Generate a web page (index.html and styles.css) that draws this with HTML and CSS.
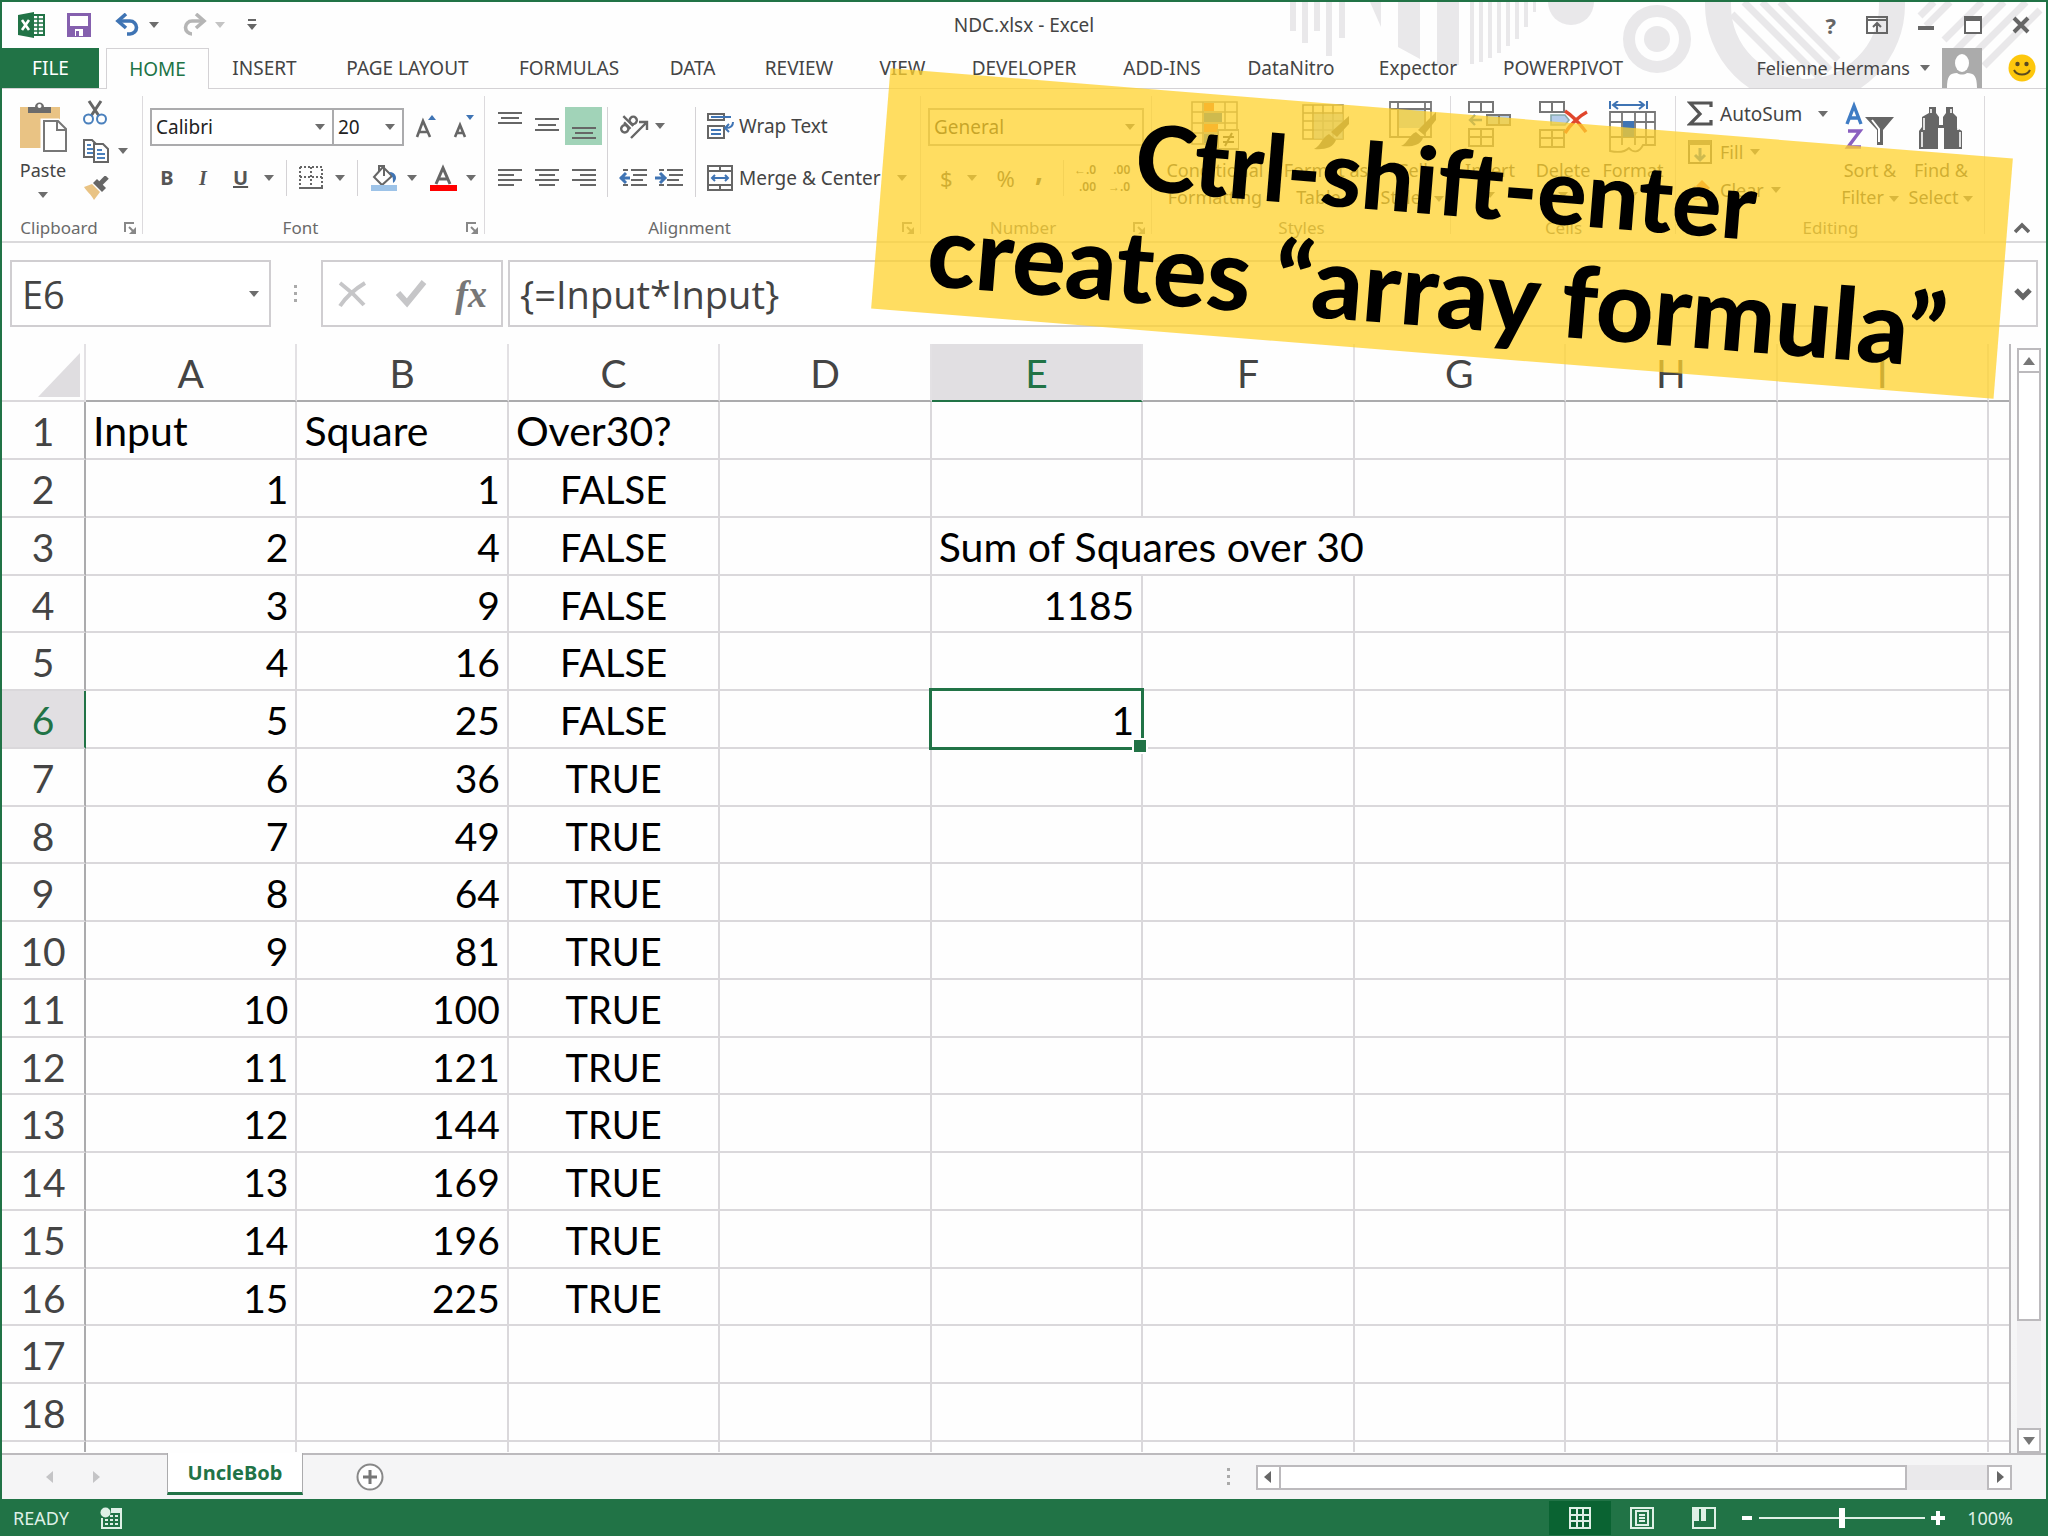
FILE: index.html
```html
<!DOCTYPE html>
<html lang="en">
<head>
<meta charset="utf-8">
<meta name="viewport" content="width=device-width, initial-scale=1">
<title>NDC.xlsx - Excel</title>
<link rel="stylesheet" href="styles.css">
</head>
<body>
<svg class="defs" aria-hidden="true">
  <symbol id="down" viewBox="0 0 10 6"><path d="M0 0h10L5 6z" fill="currentColor"/></symbol>
  <symbol id="launch" viewBox="0 0 12 12"><path d="M1 10V1h9" fill="none" stroke="currentColor" stroke-width="2"/><path d="M5 5l5 5" stroke="currentColor" stroke-width="2"/><path d="M12 5v7H5z" fill="currentColor"/></symbol>
</svg>

<div class="app">
  <svg class="backdrop" viewBox="0 0 768 86" aria-hidden="true">
    <g fill="#e9e8ea">
      <path d="M10 0h6v29h-6zM22 0h6v41h-6zM34 0h6v29h-6zM46 0h6v54h-6zM59 0h6v36h-6zM90 0h11v25z"/>
      <path d="M118 0h22v57l-22-12zM157 0h22v63h-22z"/>
      <path d="M190 0h4v62h-4zM199 0h4v60h-4zM208 0h4v56h-4zM217 0h4v51h-4zM226 0h4v44h-4zM235 0h4v37h-4zM244 0h4v25h-4zM253 0h3v10h-3z"/>
      <circle cx="291" cy="0" r="23"/>
      <circle cx="377" cy="37" r="13"/>
    </g>
    <g fill="none" stroke="#e9e8ea">
      <circle cx="377" cy="37" r="28" stroke-width="12"/>
      <circle cx="525" cy="3" r="87" stroke-width="26"/>
      <path stroke-width="7" d="M452 12l72 72M452 46l36 36M464 0l76 76M482 0l68 68M500 0l58 58M640 14l14-14M646 24l24-24M664 38l38-38M672 52l52-52M684 62l62-62M704 64l56-56"/>
    </g>
  </svg>

  <header class="titlebar">
    <div class="quick">
      <svg width="28" height="28" viewBox="0 0 28 28"><path d="M14 4h13v20H14z" fill="#fff" stroke="#217346" stroke-width="2"/><path d="M15 8h11M15 12h11M15 16h11M15 20h11M21 5v18" stroke="#217346" stroke-width="1.6"/><path d="M1 4l16-3v26L1 24z" fill="#217346"/><path d="M5 9l7 10M12 9L5 19" stroke="#fff" stroke-width="2.6"/></svg>
      <button aria-label="Save"><svg width="24" height="24" viewBox="0 0 24 24"><path d="M1.500 1.500h21v21h-21z" fill="#fff" stroke="#8560ae" stroke-width="3"/><path d="M3 13h18v9H3z" fill="#8560ae"/><path d="M8 16h8v7H8z" fill="#fff"/><path d="M9 18h3v5H9z" fill="#8560ae"/></svg></button>
      <button aria-label="Undo" class="split undo"><svg width="26" height="24" viewBox="0 0 26 24"><path d="M4 8h11a6.500 6.500 0 0 1 0 13h-3" fill="none" stroke="#3f74b4" stroke-width="3.600"/><path d="M11 1L3 8l8 7" fill="none" stroke="#3f74b4" stroke-width="3.600"/></svg><svg class="arrow"><use href="#down"/></svg></button>
      <button aria-label="Redo" class="split faded"><svg width="26" height="24" viewBox="0 0 26 24"><path d="M22 8H11a6.500 6.500 0 0 0 0 13" fill="none" stroke="#b5b5b5" stroke-width="3.600"/><path d="M15 1l8 7-8 7" fill="none" stroke="#b5b5b5" stroke-width="3.600"/></svg><svg class="arrow"><use href="#down"/></svg></button>
      <button aria-label="Customize toolbar"><svg width="10" height="12" viewBox="0 0 10 12"><path d="M1 1h8" stroke="#666" stroke-width="2"/><path d="M0 5h10l-5 6z" fill="#666"/></svg></button>
    </div>
    <h1>NDC.xlsx - Excel</h1>
    <div class="window-controls">
      <button aria-label="Help" class="help">?</button>
      <button aria-label="Ribbon display options"><svg width="22" height="18" viewBox="0 0 22 18"><path d="M1 1h20v16H1zM1 4h20M11 16V8M7 11l4-4 4 4" fill="none" stroke="#666" stroke-width="2"/></svg></button>
      <button aria-label="Minimize"><svg width="16" height="18" viewBox="0 0 16 18"><path d="M0 12h16" stroke="#666" stroke-width="4"/></svg></button>
      <button aria-label="Maximize"><svg width="18" height="18" viewBox="0 0 18 18"><path d="M1 1h16v16H1z" fill="#fff" stroke="#666" stroke-width="2"/><path d="M0 0h18v5H0z" fill="#666"/></svg></button>
      <button aria-label="Close"><svg width="18" height="18" viewBox="0 0 18 18"><path d="M2 2l14 14M16 2L2 16" stroke="#666" stroke-width="4"/></svg></button>
    </div>
  </header>

  <nav class="tabs">
    <a class="file" href="#file">FILE</a>
    <span></span>
    <a class="current" href="#home">HOME</a>
    <a href="#insert">INSERT</a>
    <a href="#page-layout">PAGE LAYOUT</a>
    <a href="#formulas">FORMULAS</a>
    <a href="#data">DATA</a>
    <a href="#review">REVIEW</a>
    <a href="#view">VIEW</a>
    <a href="#developer">DEVELOPER</a>
    <a href="#add-ins">ADD-INS</a>
    <a href="#datanitro">DataNitro</a>
    <a href="#expector">Expector</a>
    <a href="#powerpivot">POWERPIVOT</a>
    <div class="account">
      <button class="split">Felienne Hermans<svg class="arrow"><use href="#down"/></svg></button>
      <svg width="40" height="40" viewBox="0 0 40 40"><path d="M0 0h40v40H0z" fill="#ababab"/><ellipse cx="20" cy="15" rx="7" ry="9" fill="#fff"/><path d="M5 40c0-12 3-15 10-15 3 2 7 2 10 0 7 0 10 3 10 15z" fill="#fff"/></svg>
      <svg width="28" height="28" viewBox="0 0 28 28"><circle cx="14" cy="14" r="13.500" fill="#fdc70d"/><circle cx="9.500" cy="10" r="2.200" fill="#5a4a20"/><circle cx="18.500" cy="10" r="2.200" fill="#5a4a20"/><path d="M6 16c3 6 13 6 16 0" fill="none" stroke="#5a4a20" stroke-width="2"/></svg>
    </div>
  </nav>

  <section class="ribbon" aria-label="Home">
    <div class="group clipboard">
      <div class="body">
        <button class="big"><svg width="48" height="52" viewBox="0 0 48 52"><path d="M1 6h40v41H1z" fill="#e9c384"/><path d="M9 12V6h7c0-6 9-6 9 0h7v6z" fill="#6b6b6b"/><circle cx="20.500" cy="5" r="2" fill="#fff"/><path d="M24 20h15l8 8v22H24z" fill="#fff" stroke="#fff" stroke-width="5"/><path d="M25 20h14l8 8v22H25zM38 20v9h9" fill="#fff" stroke="#777" stroke-width="2"/></svg><span>Paste</span><svg class="arrow"><use href="#down"/></svg></button>
        <div class="stack">
          <button aria-label="Cut"><svg width="24" height="26" viewBox="0 0 24 26"><path d="M6 1l10 15M18 1L8 16" stroke="#666" stroke-width="3"/><circle cx="5.500" cy="19" r="4.500" fill="none" stroke="#4a80bd" stroke-width="2"/><circle cx="18.500" cy="19" r="4.500" fill="none" stroke="#4a80bd" stroke-width="2"/></svg></button>
          <button aria-label="Copy" class="split"><svg width="26" height="24" viewBox="0 0 26 24"><path d="M1 1h8l5 5v12H1z" fill="#fff" stroke="#666" stroke-width="2"/><path d="M4 6h4M4 10h6M4 14h6" stroke="#4a80bd" stroke-width="2"/><path d="M11 5h9l5 5v13H11z" fill="#fff" stroke="#666" stroke-width="2"/><path d="M14 11h5M14 15h8M14 19h8" stroke="#4a80bd" stroke-width="2"/></svg><svg class="arrow"><use href="#down"/></svg></button>
          <button aria-label="Format painter"><svg width="26" height="24" viewBox="0 0 26 24"><path d="M1 11l8-3 8 8-6 8C8 18 4 16 1 11z" fill="#e9c384"/><path d="M10 7l4-4 9 9-4 4z" fill="#666"/><path d="M16 9l8-8" stroke="#666" stroke-width="5"/></svg></button>
        </div>
      </div>
      <div class="caption dialog">Clipboard<svg class="launch"><use href="#launch"/></svg></div>
    </div>

    <div class="group font">
      <div class="body rows">
        <div class="row">
          <label class="combo face"><select aria-label="Font"><option>Calibri</option></select><svg class="arrow"><use href="#down"/></svg></label><label class="combo size"><select aria-label="Font size"><option>20</option></select><svg class="arrow"><use href="#down"/></svg></label>
          <button class="grow" aria-label="Increase font size"><svg width="22" height="26" viewBox="0 0 22 26"><path d="M2 23L8 7l7 16M4 18h8" fill="none" stroke="#666" stroke-width="2.600"/><path d="M13 6h8l-4-5z" fill="#3f74b4"/></svg></button>
          <button class="shrink" aria-label="Decrease font size"><svg width="22" height="26" viewBox="0 0 22 26"><path d="M2 23L7 11l5 12M4 19h6" fill="none" stroke="#666" stroke-width="2.600"/><path d="M13 1h8l-4 5z" fill="#3f74b4"/></svg></button>
        </div>
        <div class="row second">
          <button class="letter"><b>B</b></button>
          <button class="letter"><i>I</i></button>
          <button class="letter split"><u>U</u><svg class="arrow"><use href="#down"/></svg></button>
          <i class="rule"></i>
          <button class="split" aria-label="Borders"><svg width="24" height="24" viewBox="0 0 24 24"><path d="M1 1h22v20M1 1v20M12 1v20M1 11h22" fill="none" stroke="#666" stroke-width="2" stroke-dasharray="2 2"/><path d="M0 22h24" stroke="#666" stroke-width="2"/></svg><svg class="arrow"><use href="#down"/></svg></button>
          <i class="rule"></i>
          <button class="split tight" aria-label="Fill color"><svg width="28" height="28" viewBox="0 0 28 28"><path d="M13 3L4 13l8 8 10-9z" fill="#fff" stroke="#666" stroke-width="2"/><path d="M9 8V2h5v10" fill="none" stroke="#666" stroke-width="2"/><path d="M19 8c8 0 9 8 4 11 0-5 0-7-4-11z" fill="#3f74b4"/><path d="M1 21h26v6H1z" fill="#9dc3e8"/></svg><svg class="arrow"><use href="#down"/></svg></button>
          <button class="split tight" aria-label="Font color"><svg width="28" height="28" viewBox="0 0 28 28"><path d="M7 20l7-16 7 16M9 15h10" fill="none" stroke="#666" stroke-width="3"/><path d="M1 21h27v6H1z" fill="#f00"/></svg><svg class="arrow"><use href="#down"/></svg></button>
        </div>
      </div>
      <div class="caption dialog">Font<svg class="launch"><use href="#launch"/></svg></div>
    </div>

    <div class="group alignment">
      <div class="body">
        <div class="align-grid">
          <button aria-label="Top align"><svg width="24" height="38" viewBox="0 0 24 38"><path d="M0 6h24M3 11h18M0 16h24" stroke="#666" stroke-width="2"/></svg></button>
          <button aria-label="Middle align"><svg width="24" height="38" viewBox="0 0 24 38"><path d="M0 12h24M3 18h18M0 23h24" stroke="#666" stroke-width="2"/></svg></button>
          <button aria-label="Bottom align" class="pressed"><svg width="24" height="38" viewBox="0 0 24 38"><path d="M0 21h24M3 26h18M0 31h24" stroke="#666" stroke-width="2"/></svg></button>
          <button aria-label="Align left"><svg width="24" height="18" viewBox="0 0 24 18"><path d="M0 1h24M0 6h16M0 11h24M0 16h16" stroke="#666" stroke-width="2"/></svg></button>
          <button aria-label="Center"><svg width="24" height="18" viewBox="0 0 24 18"><path d="M0 1h24M4 6h16M0 11h24M4 16h16" stroke="#666" stroke-width="2"/></svg></button>
          <button aria-label="Align right"><svg width="24" height="18" viewBox="0 0 24 18"><path d="M0 1h24M8 6h16M0 11h24M8 16h16" stroke="#666" stroke-width="2"/></svg></button>
        </div>
        <div class="indent-grid">
          <button class="split" aria-label="Orientation"><svg width="30" height="28" viewBox="0 0 30 28"><g fill="none" stroke="#666" stroke-width="2.400"><g transform="rotate(-45 10 14)"><circle cx="5" cy="13" r="3.600"/><path d="M9 8v9M13 3v14"/><circle cx="17" cy="13" r="3.600"/></g><path d="M12 26l15-15M20 10h8v8"/></g></svg><svg class="arrow"><use href="#down"/></svg></button>
          <div class="pair">
            <button aria-label="Decrease indent"><svg width="28" height="18" viewBox="0 0 28 18"><path d="M4 1h5M4 16h5M12 1h16M14 6h14M12 11h12M12 16h16" stroke="#666" stroke-width="2"/><path d="M1 9h10M7 4L2 9l5 5" fill="none" stroke="#3f74b4" stroke-width="3"/></svg></button>
            <button aria-label="Increase indent"><svg width="28" height="18" viewBox="0 0 28 18"><path d="M4 1h5M4 16h5M12 1h16M14 6h14M12 11h12M12 16h16" stroke="#666" stroke-width="2"/><path d="M0 9h10M5 4l5 5-5 5" fill="none" stroke="#3f74b4" stroke-width="3"/></svg></button>
          </div>
        </div>
        <div class="text-grid">
          <button><svg width="28" height="26" viewBox="0 0 28 26"><path d="M1 1h16v6H1zM1 13h16v12H1z" fill="none" stroke="#666" stroke-width="2"/><path d="M4 4h20M4 17h10M4 21h10M26 9c0 5-3 6-7 6M22 11l-4 4 4 4" fill="none" stroke="#3f74b4" stroke-width="2"/></svg>Wrap Text</button>
          <button><svg width="28" height="26" viewBox="0 0 28 26"><path d="M1 1h24v24H1zM1 6h24M1 20h24M13 1v5M13 20v5" fill="none" stroke="#666" stroke-width="2"/><path d="M5 13h16M8 10l-3 3 3 3M18 10l3 3-3 3" fill="none" stroke="#3f74b4" stroke-width="2"/></svg>Merge &amp; Center<svg class="arrow"><use href="#down"/></svg></button>
        </div>
      </div>
      <div class="caption dialog">Alignment<svg class="launch"><use href="#launch"/></svg></div>
    </div>

    <div class="group number">
      <div class="body rows">
        <div class="row"><label class="combo format"><select aria-label="Number format"><option>General</option></select><svg class="arrow"><use href="#down"/></svg></label></div>
        <div class="row second">
          <button class="sign split">$<svg class="arrow"><use href="#down"/></svg></button>
          <button class="sign">%</button>
          <button class="sign comma"><b>,</b></button>
          <i class="rule"></i>
          <button class="decimals"><span>←.0</span><span>.00</span></button>
          <button class="decimals"><span>.00</span><span>→.0</span></button>
        </div>
      </div>
      <div class="caption dialog">Number<svg class="launch"><use href="#launch"/></svg></div>
    </div>

    <div class="group styles">
      <div class="body">
        <button class="big"><svg width="48" height="52" viewBox="0 0 48 52"><path d="M1 1h45v42H1zM1 11h45M1 22h45M1 32h45M12 1v42M34 1v42" fill="#fff" stroke="#888" stroke-width="1.600"/><path d="M13 2h10v8H13zM13 23h14v8H13z" fill="#e8703a"/><path d="M13 12h18v9H13zM13 33h10v9H13z" fill="#3f74b4"/><path d="M27 29h21v19H27z" fill="#fff" stroke="#888" stroke-width="2"/><path d="M32 36h11M32 41h11M41 32l-7 13" stroke="#444" stroke-width="2"/></svg><span>Conditional<br>Formatting</span></button>
        <button class="big"><svg width="48" height="52" viewBox="0 0 48 52"><path d="M1 4h40v34H1zM1 12h40M1 20h40M1 29h40M11 4v34M21 4v34M31 4v34" fill="#fff" stroke="#777" stroke-width="1.600"/><path d="M12 13h29v25H12z" fill="#9dbbe0" opacity=".7"/><path d="M47 15v8L35 36l-6-5z" fill="#666"/><path d="M27 33l7 6c-3 8-12 10-22 9 7-3 8-12 15-15z" fill="#666"/></svg><span>Format as<br>Table<svg class="arrow"><use href="#down"/></svg></span></button>
        <button class="big"><svg width="48" height="52" viewBox="0 0 48 52"><path d="M1 1h41v35H1zM1 8h41M9 1v35M36 1v35" fill="#fff" stroke="#777" stroke-width="1.800"/><path d="M10 9h25v18H10z" fill="#b5cdea"/><path d="M47 11v8L35 34l-6-5z" fill="#666"/><path d="M27 31l7 6c-3 8-12 9-22 8 7-3 8-11 15-14z" fill="#666"/></svg><span>Cell<br>Styles<svg class="arrow"><use href="#down"/></svg></span></button>
      </div>
      <div class="caption">Styles</div>
    </div>

    <div class="group cells">
      <div class="body">
        <button class="big"><svg width="48" height="52" viewBox="0 0 48 52"><path d="M3 1h24v10H3zM15 1v10M3 28h24v17H3zM15 28v17M3 36h24" fill="#fff" stroke="#777" stroke-width="2"/><path d="M21 14h23v10H21z" fill="#b5cdea" stroke="#777" stroke-width="2"/><path d="M33 14v10" stroke="#777" stroke-width="2"/><path d="M4 19h12M9 14l-5 5 5 5" fill="none" stroke="#3f74b4" stroke-width="2.400"/></svg><span>Insert</span><svg class="arrow"><use href="#down"/></svg></button>
        <button class="big"><svg width="52" height="52" viewBox="0 0 52 52"><path d="M3 1h24v10H3zM15 1v10M3 29h24v17H3zM15 29v17M3 37h24" fill="#fff" stroke="#777" stroke-width="2"/><path d="M14 14h14l4 5-4 5H14z" fill="#b5cdea" stroke="#8aa" stroke-width="1.600"/><path d="M28 10c8 5 15 13 21 21M50 11c-8 4-17 13-22 21" fill="none" stroke="#e0462c" stroke-width="3.400"/></svg><span>Delete</span><svg class="arrow"><use href="#down"/></svg></button>
        <button class="big"><svg width="48" height="52" viewBox="0 0 48 52"><path d="M1 0v8M38 0v8M4 4h31M9 0L4 4l5 4M30 0l5 4-5 4" fill="none" stroke="#3f74b4" stroke-width="2"/><path d="M1 11h45v33H34c-4 8-10 8-14 3-4 4-10 5-19 3zM1 21h45M1 36h45M13 11v33M26 11v33M37 11v33" fill="#fff" stroke="#777" stroke-width="1.800"/><path d="M14 20h11v16H14z" fill="#3f74b4"/></svg><span>Format</span><svg class="arrow"><use href="#down"/></svg></button>
      </div>
      <div class="caption">Cells</div>
    </div>

    <div class="group editing">
      <div class="body">
        <div class="stack wide">
          <button><svg width="26" height="26" viewBox="0 0 26 26"><path d="M24 6V2H3l10 11L3 23h21v-4" fill="none" stroke="#555" stroke-width="3.200"/></svg>AutoSum<svg class="arrow far"><use href="#down"/></svg></button>
          <button><svg width="26" height="26" viewBox="0 0 26 26"><path d="M2 2h22v22H2z" fill="#fff" stroke="#666" stroke-width="2"/><path d="M2 1h22v5H2z" fill="#777"/><path d="M13 9v12M8 16l5 5 5-5" fill="none" stroke="#3f74b4" stroke-width="3"/></svg>Fill<svg class="arrow"><use href="#down"/></svg></button>
          <button><svg width="26" height="26" viewBox="0 0 26 26"><path d="M15 3l8 8-6 6-8-8z" fill="#e8703a"/><path d="M8 10l8 8-3 4H8l-5-6z" fill="#fff" stroke="#e8a080" stroke-width="2"/></svg>Clear<svg class="arrow"><use href="#down"/></svg></button>
        </div>
        <button class="big"><svg width="52" height="52" viewBox="0 0 52 52"><path d="M3 23L10 5l7 18M5 17h10" fill="none" stroke="#3f7cc4" stroke-width="3.400"/><path d="M4 30h12L4 46h13" fill="none" stroke="#8a5fc0" stroke-width="3.400"/><path d="M21 16h29L39 29v15h-6V29z" fill="#666"/><path d="M28 19l7 9v13" fill="none" stroke="#fff" stroke-width="2"/></svg><span>Sort &amp;<br>Filter<svg class="arrow"><use href="#down"/></svg></span></button>
        <button class="big"><svg width="46" height="52" viewBox="0 0 46 52"><path d="M11 6h7v6l3 4v8h4v-8l3-4V6h7v6l4 4v11l5 3v18H26V27h-6v21H1V30l3-4V16l7-4z" fill="#666"/><path d="M6 17v12M4 31v15M40 17v12M42 31v15M13 8v4M33 8v4" stroke="#fff" stroke-width="1.600"/></svg><span>Find &amp;<br>Select<svg class="arrow"><use href="#down"/></svg></span></button>
      </div>
      <div class="caption">Editing</div>
    </div>

    <button class="collapse" aria-label="Collapse ribbon"><svg width="16" height="12" viewBox="0 0 16 12"><path d="M1 10l7-7 7 7" fill="none" stroke="#666" stroke-width="3.600"/></svg></button>
  </section>

  <section class="formula-bar">
    <label class="name-box"><input value="E6" aria-label="Name box"><svg class="arrow"><use href="#down"/></svg></label>
    <svg class="grip" width="4" height="20" viewBox="0 0 4 20"><path d="M0 1h3v3H0zM0 8h3v3H0zM0 15h3v3H0z" fill="#aaa"/></svg>
    <div class="entry">
      <button aria-label="Cancel"><svg width="30" height="30" viewBox="0 0 30 30"><path d="M3 4c8 6 16 13 24 22M28 4C18 10 9 18 3 27" fill="none" stroke="#c6c6c8" stroke-width="4"/></svg></button>
      <button aria-label="Enter"><svg width="32" height="30" viewBox="0 0 32 30"><path d="M3 14l9 10L29 3" fill="none" stroke="#c6c6c8" stroke-width="6"/></svg></button>
      <button class="fx">fx</button>
    </div>
    <label class="formula"><input value="{=Input*Input}" aria-label="Formula"><svg width="18" height="14" viewBox="0 0 18 14"><path d="M2 3l7 7 7-7" fill="none" stroke="#666" stroke-width="5"/></svg></label>
  </section>

  <main class="sheet">
    <div class="grid-window">
      <table>
        <colgroup><col class="head"><col><col><col><col><col><col><col><col><col><col class="tail"></colgroup>
        <thead>
          <tr><th><svg class="corner" width="42" height="44" viewBox="0 0 42 44"><path d="M42 0v44H0z" fill="#dfdde0"/></svg></th><th>A</th><th>B</th><th>C</th><th>D</th><th class="active">E</th><th>F</th><th>G</th><th>H</th><th>I</th><th></th></tr>
        </thead>
        <tbody>
          <tr><th>1</th><td class="t">Input</td><td class="t">Square</td><td class="t">Over30?</td><td></td><td></td><td></td><td></td><td></td><td></td><td></td></tr>
          <tr><th>2</th><td>1</td><td>1</td><td class="c">FALSE</td><td></td><td></td><td></td><td></td><td></td><td></td><td></td></tr>
          <tr><th>3</th><td>2</td><td>4</td><td class="c">FALSE</td><td></td><td class="t" colspan="3">Sum of Squares over 30</td><td></td><td></td><td></td></tr>
          <tr><th>4</th><td>3</td><td>9</td><td class="c">FALSE</td><td></td><td>1185</td><td></td><td></td><td></td><td></td><td></td></tr>
          <tr><th>5</th><td>4</td><td>16</td><td class="c">FALSE</td><td></td><td></td><td></td><td></td><td></td><td></td><td></td></tr>
          <tr><th class="active">6</th><td>5</td><td>25</td><td class="c">FALSE</td><td></td><td class="selected">1</td><td></td><td></td><td></td><td></td><td></td></tr>
          <tr><th>7</th><td>6</td><td>36</td><td class="c">TRUE</td><td></td><td></td><td></td><td></td><td></td><td></td><td></td></tr>
          <tr><th>8</th><td>7</td><td>49</td><td class="c">TRUE</td><td></td><td></td><td></td><td></td><td></td><td></td><td></td></tr>
          <tr><th>9</th><td>8</td><td>64</td><td class="c">TRUE</td><td></td><td></td><td></td><td></td><td></td><td></td><td></td></tr>
          <tr><th>10</th><td>9</td><td>81</td><td class="c">TRUE</td><td></td><td></td><td></td><td></td><td></td><td></td><td></td></tr>
          <tr><th>11</th><td>10</td><td>100</td><td class="c">TRUE</td><td></td><td></td><td></td><td></td><td></td><td></td><td></td></tr>
          <tr><th>12</th><td>11</td><td>121</td><td class="c">TRUE</td><td></td><td></td><td></td><td></td><td></td><td></td><td></td></tr>
          <tr><th>13</th><td>12</td><td>144</td><td class="c">TRUE</td><td></td><td></td><td></td><td></td><td></td><td></td><td></td></tr>
          <tr><th>14</th><td>13</td><td>169</td><td class="c">TRUE</td><td></td><td></td><td></td><td></td><td></td><td></td><td></td></tr>
          <tr><th>15</th><td>14</td><td>196</td><td class="c">TRUE</td><td></td><td></td><td></td><td></td><td></td><td></td><td></td></tr>
          <tr><th>16</th><td>15</td><td>225</td><td class="c">TRUE</td><td></td><td></td><td></td><td></td><td></td><td></td><td></td></tr>
          <tr><th>17</th><td></td><td></td><td></td><td></td><td></td><td></td><td></td><td></td><td></td><td></td></tr>
          <tr><th>18</th><td></td><td></td><td></td><td></td><td></td><td></td><td></td><td></td><td></td><td></td></tr>
          <tr class="cut"><th></th><td></td><td></td><td></td><td></td><td></td><td></td><td></td><td></td><td></td><td></td></tr>
        </tbody>
      </table>
    </div>
    <div class="vscroll">
      <button aria-label="Scroll up"><svg width="12" height="8" viewBox="0 0 12 8"><path d="M0 8h12L6 0z" fill="#777"/></svg></button>
      <div class="thumb"></div>
      <div class="track"></div>
      <button aria-label="Scroll down"><svg width="12" height="8" viewBox="0 0 12 8"><path d="M0 0h12L6 8z" fill="#777"/></svg></button>
    </div>
  </main>

  <footer class="sheet-bar">
    <div class="sheet-nav">
      <button aria-label="Previous sheet"><svg width="8" height="12" viewBox="0 0 8 12"><path d="M7 0v12L0 6z" fill="#c4c4c6"/></svg></button>
      <button aria-label="Next sheet"><svg width="8" height="12" viewBox="0 0 8 12"><path d="M1 0v12l7-6z" fill="#c4c4c6"/></svg></button>
    </div>
    <button class="sheet-tab">UncleBob</button>
    <button class="add" aria-label="New sheet"><svg width="28" height="28" viewBox="0 0 28 28"><circle cx="14" cy="14" r="12.500" fill="#fff" stroke="#888" stroke-width="2"/><path d="M14 7v14M7 14h14" stroke="#777" stroke-width="3"/></svg></button>
    <svg class="grip" width="4" height="20" viewBox="0 0 4 20"><path d="M0 1h3v3H0zM0 8h3v3H0zM0 15h3v3H0z" fill="#aaa"/></svg>
    <div class="hscroll">
      <button aria-label="Scroll left"><svg width="8" height="12" viewBox="0 0 8 12"><path d="M7 0v12L0 6z" fill="#666"/></svg></button>
      <div class="thumb"></div>
      <div class="track"></div>
      <button aria-label="Scroll right"><svg width="8" height="12" viewBox="0 0 8 12"><path d="M1 0v12l7-6z" fill="#666"/></svg></button>
    </div>
  </footer>

  <div class="status">
    <span>READY</span>
    <button aria-label="Record macro"><svg width="22" height="22" viewBox="0 0 22 22"><path d="M2 11v10h19V2h-9" fill="none" stroke="#dff0e6" stroke-width="2"/><circle cx="5.500" cy="5.500" r="5" fill="#dff0e6"/><path d="M11 1h11v5H11z" fill="#dff0e6"/><path d="M5 13h3M10 13h3M15 13h3M5 17h3M10 17h3M15 17h3M10 9h3M15 9h3" stroke="#dff0e6" stroke-width="2"/></svg></button>
    <div class="views">
      <button class="on" aria-label="Normal view"><svg width="22" height="22" viewBox="0 0 22 22"><path d="M1 1h20v20H1zM1 8h20M1 14h20M8 1v20M14 1v20" fill="none" stroke="#dff0e6" stroke-width="2"/></svg></button>
      <button aria-label="Page layout view"><svg width="24" height="22" viewBox="0 0 24 22"><path d="M1 1h22v20H1zM6 4h12v14H6zM9 8h6M9 11h6M9 14h6" fill="none" stroke="#dff0e6" stroke-width="2"/></svg></button>
      <button aria-label="Page break view"><svg width="24" height="22" viewBox="0 0 24 22"><path d="M1 1h22v20H1z" fill="none" stroke="#dff0e6" stroke-width="2"/><path d="M2 2h5v12H2zM9 2h5v12H9z" fill="#dff0e6"/></svg></button>
    </div>
    <div class="zoom">
      <button aria-label="Zoom out"><svg width="12" height="12" viewBox="0 0 12 12"><path d="M1 6h10" stroke="#fff" stroke-width="4"/></svg></button>
      <input type="range" aria-label="Zoom" min="0" max="200" value="100">
      <button aria-label="Zoom in"><svg width="14" height="14" viewBox="0 0 14 14"><path d="M0 7h14M7 0v14" stroke="#fff" stroke-width="4"/></svg></button>
      <span>100%</span>
    </div>
  </div>

  <p class="callout"><span>Ctrl-shift-enter</span><span class="wide-line">creates “array formula”</span></p>
</div>
</body>
</html>
```
FILE: styles.css
```css
* { box-sizing: border-box; }

body {
  margin: 0;
  background: #fefefe;
  color: #444;
  font: 19px/24px "Noto Sans", "Open Sans", sans-serif;
}

.defs { position: absolute; width: 0; height: 0; }
svg { display: block; flex: none; }

button {
  margin: 0;
  padding: 0;
  border: 0;
  background: none;
  color: inherit;
  font: inherit;
  display: flex;
  align-items: center;
  justify-content: center;
}

.arrow { width: 10px; height: 6px; color: #6d6d6d; }
.launch { width: 12px; height: 12px; color: #888; }

.app {
  position: relative;
  min-height: 100vh;
  display: flex;
  flex-direction: column;
  border: 2px solid #217346;
  border-bottom: 0;
  overflow: hidden;
}

.backdrop { position: absolute; top: 0; right: -2px; width: 768px; height: 86px; z-index: -1; }

/* title bar */
.titlebar {
  display: grid;
  grid-template-columns: 1fr auto 1fr;
  align-items: center;
  height: 46px;
}
.titlebar h1 { margin: 0; font-size: 19px; font-weight: 400; }
.quick { display: flex; align-items: center; gap: 22px; padding-left: 15px; }
.quick .split { display: flex; gap: 8px; }
.quick .undo { padding-left: 2px; }
.faded .arrow { color: #c4c4c4; }
.window-controls { display: flex; align-items: center; justify-content: flex-end; gap: 30px; padding-right: 16px; }
.help { font-weight: 700; font-size: 22px; color: #666; }

/* ribbon tabs */
.tabs {
  display: grid;
  grid-template-columns: 97px 7px 103px 111px 175px 148px 99px 114px 93px 150px 126px 132px 122px 168px 1fr;
  height: 41px;
  border-bottom: 1px solid #d4d2d5;
}
.tabs a {
  display: flex;
  align-items: center;
  justify-content: center;
  color: #444;
  text-decoration: none;
  white-space: nowrap;
}
.tabs .file { background: #217346; color: #fff; }
.tabs .current { border: 1px solid #d4d2d5; border-bottom: 0; background: #fefefe; color: #217346; margin-bottom: -1px; }
.account { display: flex; align-items: center; justify-content: flex-end; padding-right: 10px; font-size: 18px; white-space: nowrap; }
.account .split { gap: 10px; margin-right: 12px; }
.account svg + svg { margin-left: 26px; }

/* ribbon */
.ribbon {
  display: grid;
  grid-template-columns: 141px 342px 436px 231px 299px 225px 309px 1fr;
  height: 154px;
  border-bottom: 2px solid #dad9db;
}
.group {
  position: relative;
  display: flex;
  flex-direction: column;
}
.group::after {
  content: "";
  position: absolute;
  top: 7px;
  right: 0;
  bottom: 7px;
  width: 1px;
  background: #dcdadd;
}
.body { flex: 1; display: flex; }
.caption { height: 26px; line-height: 26px; text-align: center; font-size: 17px; color: #6a6a6a; position: relative; }
.caption .launch { position: absolute; right: 7px; top: 7px; }
.dialog { padding-right: 27px; }

.big { flex-direction: column; justify-content: flex-start; padding-top: 12px; font-size: 18px; line-height: 27px; white-space: nowrap; }
.big > span { margin-top: 4px; }
.big > .arrow { margin-top: 8px; }
.big span .arrow { display: inline-block; vertical-align: middle; margin-left: 5px; }

.clipboard .body { padding-left: 17px; gap: 16px; }
.stack { display: flex; flex-direction: column; align-items: flex-start; gap: 13px; padding-top: 11px; }
.stack .split { gap: 9px; }

.rows { flex-direction: column; padding-top: 19px; gap: 18px; }
.row { display: flex; align-items: center; height: 38px; }
.font .rows { padding-left: 7px; }
.second { height: 28px; }
.combo { display: flex; align-items: center; position: relative; height: 38px; border: 2px solid #ababad; background: #fff; }
.combo + .combo { margin-left: -2px; }
.combo select { appearance: none; width: 100%; height: 34px; border: 0; padding: 0 4px; background: transparent; font: inherit; color: #222; }
.combo .arrow { position: absolute; right: 7px; }
.face { width: 184px; }
.size { width: 72px; }
.grow { margin-left: 11px; }
.shrink { margin-left: 16px; }
.letter { font-size: 20px; width: 24px; }
.letter b, .letter i, .letter u { font-weight: 700; color: #555; }
.letter i { font-family: "Liberation Serif", serif; }
.font .second { padding-left: 5px; gap: 12px; }
.font .second .split { gap: 12px; width: auto; }
.font .second .tight { gap: 9px; }
.font .second .letter.split { gap: 16px; padding-left: 6px; }
.rule { width: 1px; height: 36px; background: #d4d2d5; }

.alignment .body { padding-top: 18px; padding-left: 6px; }
.align-grid { display: grid; grid-template-columns: repeat(3, 37px); grid-template-rows: 38px 38px; row-gap: 14px; align-content: start; }
.pressed { background: #a1d3b8; }
.indent-grid { display: grid; grid-template-columns: 76px; grid-template-rows: 38px 38px; row-gap: 14px; align-content: start; margin-left: 5px; border-left: 1px solid #d4d2d5; height: 90px; padding-left: 11px; }
.indent-grid .split { justify-content: flex-start; gap: 6px; }
.pair { display: flex; gap: 8px; align-items: center; }
.text-grid { display: grid; grid-template-rows: 38px 38px; row-gap: 14px; align-content: start; border-left: 1px solid #d4d2d5; height: 90px; padding-left: 11px; }
.text-grid button { justify-content: flex-start; gap: 4px; white-space: nowrap; }
.text-grid .arrow { margin-left: 12px; }

.number .rows { padding-left: 7px; }
.format { width: 216px; }
.number .second { padding-left: 12px; gap: 20px; }
.sign { font-size: 22px; }
.sign.split { gap: 14px; }
.comma { font-size: 28px; align-self: flex-start; line-height: 12px; }
.number .rule { margin-right: -10px; }
.decimals { flex-direction: column; font-size: 12px; line-height: 17px; font-weight: 600; align-items: flex-end; margin-right: -8px; }

.styles .body { display: grid; grid-template-columns: 126px 96px 77px; }
.cells .body { display: grid; grid-template-columns: 78px 68px 72px; }
.editing .body { display: grid; grid-template-columns: 160px 68px 74px; }
.wide { gap: 12px; padding: 12px 0 0 11px; }
.wide button { gap: 7px; font-size: 18px; }
.wide button:first-child { font-size: 19px; }
.wide .far { margin-left: 9px; }
.collapse { align-self: end; justify-self: start; margin: 0 0 7px 29px; }

/* formula bar */
.formula-bar { display: flex; align-items: center; height: 101px; padding: 0 8px; }
.formula-bar input { width: 100%; border: 0; padding: 0; background: transparent; color: #444; font: 38px/48px "Open Sans", "Noto Sans", sans-serif; outline: 0; }
.name-box, .entry, .formula { display: flex; align-items: center; height: 67px; border: 2px solid #d0ced1; background: #fff; }
.name-box { width: 261px; padding: 0 10px; }
.formula-bar .grip { margin: 0 23px; }
.entry { width: 182px; justify-content: space-between; padding: 0 14px; margin-right: 5px; }
.fx { font: italic 700 38px/40px "Liberation Serif", serif; color: #777; }
.formula { flex: 1; padding: 0 4px 0 10px; }

/* worksheet */
.sheet { flex: 1; display: flex; background: linear-gradient(#fefefe, #f5f5f6); }
.grid-window { flex: 1; border-right: 2px solid #bcbabd; background: #fefefe; }
table { width: 100%; table-layout: fixed; border-collapse: separate; border-spacing: 0; font: 39px/48px Lato, "Open Sans", sans-serif; }
.head { width: 84px; }
.tail { width: 20px; }
th { font-weight: 400; padding: 2px 0 0; }
thead th { height: 58px; border-bottom: 2px solid #ababad; border-right: 2px solid #e3e1e4; }
thead th:first-child { border-bottom-color: #dad8db; }
.corner { margin: 3px 4px 0 auto; }
thead .active { background: #e1dfe2; color: #217346; border-bottom-color: #217346; }
tbody tr { height: 58px; }
tbody tr:nth-child(4n) { height: 57px; }
tbody .cut { height: 10px; }
tbody th { border-right: 2px solid #ababad; border-bottom: 2px solid #dad8db; }
tbody .active { background: #e1dfe2; color: #217346; border-right-color: #217346; }
td { position: relative; padding: 2px 7px 0; border-right: 2px solid #dad8db; border-bottom: 2px solid #dad8db; text-align: right; color: #000; white-space: nowrap; }
.cut th, .cut td { border-bottom: 0; }
td:last-child, thead th:last-child { border-right: 0; }
td.t { text-align: left; font-size: 41px; }
td.c { text-align: center; font-size: 38px; }
.selected { z-index: 1; }
.selected::before { content: ""; position: absolute; inset: -3px; border: 3px solid #217346; }
.selected::after { content: ""; position: absolute; right: -7px; bottom: -7px; width: 12px; height: 12px; background: #217346; border: 2px solid #fff; }

.vscroll { width: 35px; display: flex; flex-direction: column; padding: 4px 5px 0 6px; }
.vscroll button { height: 25px; border: 2px solid #bcbabd; background: #fff; }
.vscroll .thumb { flex: 950; border: 2px solid #bcbabd; border-top: 0; background: #fff; }
.vscroll .track { flex: 107; background: #f0eff1; }

/* sheet tabs */
.sheet-bar { display: flex; align-items: center; height: 46px; background: #f5f5f6; border-top: 2px solid #bcbabd; }
.sheet-nav { display: flex; gap: 38px; width: 165px; padding-left: 44px; }
.sheet-tab { align-self: flex-start; width: 136px; height: 42px; margin-top: -2px; border: 1px solid #ababad; border-top: 0; border-bottom: 3px solid #217346; background: #fff; color: #217346; font-size: 20px; font-weight: 700; }
.add { margin-left: 53px; }
.sheet-bar .grip { margin: 0 25px 0 auto; }
.hscroll { display: flex; width: 37%; height: 25px; margin-right: 34px; background: #eae9eb; }
.hscroll button { width: 25px; border: 2px solid #bcbabd; background: #fff; }
.hscroll .thumb { flex: 625; border: 2px solid #bcbabd; border-left: 0; background: #fff; }
.hscroll .track { flex: 80; }

/* status bar */
.status { display: flex; align-items: center; height: 37px; padding: 0 33px 0 11px; background: #217346; color: #dff0e6; font-size: 18px; }
.status > button { margin-left: 31px; }
.views { display: flex; margin-left: auto; height: 34px; }
.views button { width: 62px; }
.views .on { background: #0a6332; }
.zoom { display: flex; align-items: center; margin-left: 6px; }
.zoom input { appearance: none; width: 166px; height: 20px; margin: 0 6px; background: linear-gradient(#dff0e6, #dff0e6) center / 100% 2px no-repeat; }
.zoom input::-webkit-slider-thumb { appearance: none; width: 6px; height: 20px; background: #fff; }
.zoom span { margin-left: 22px; }

/* sticky note over the ribbon */
.callout {
  position: absolute;
  z-index: 2;
  top: 111px;
  right: 41px;
  width: 1126px;
  margin: 0;
  padding: 13px 0 12px;
  background: rgba(255, 209, 44, .75);
  color: #000;
  font: 900 92px/108px Lato, "Open Sans", sans-serif;
  text-align: center;
  white-space: nowrap;
  transform: rotate(4.6deg);
}
.callout span { display: block; }
.callout .wide-line { font-size: 100px; }
```
